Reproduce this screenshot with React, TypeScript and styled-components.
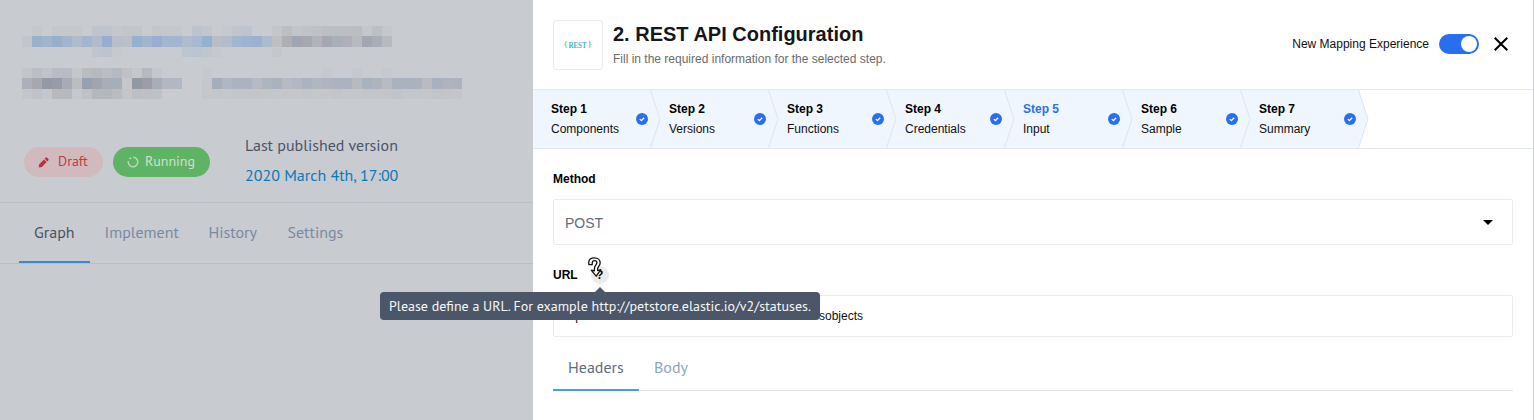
import React from 'react';
import styled, { createGlobalStyle } from 'styled-components';

const ui = `"Liberation Sans", Arial, sans-serif`;
const humanist = `"PT Sans", "Noto Sans", sans-serif`;

const Global = createGlobalStyle`
  * { box-sizing: border-box; }
  body { margin: 0; background: #c8cbd0; }
`;

const Page = styled.div`
  position: relative;
  display: flex;
  width: 1534px;
  height: 420px;
  overflow: hidden;
`;

/* ---------- dimmed background page ---------- */

const Backdrop = styled.div`
  width: 533px;
  background: #c8cbd0;
  font-family: ${humanist};
  display: flex;
  flex-direction: column;
`;

const Redacted = styled.div`
  height: 121px;
  padding: 26px 0 0 22px;
  display: flex;
  flex-direction: column;
  gap: 11px;
`;

const MosaicRow = styled.div<{ $h: number }>`
  display: flex;
  height: ${(p) => p.$h}px;
`;

const Tile = styled.span<{ $c: string }>`
  width: 10px;
  background: ${(p) => (p.$c === '-' ? 'transparent' : `#${p.$c}`)};
`;

const StatusBar = styled.div`
  height: 82px;
  display: flex;
  align-items: center;
  padding-left: 24px;
  border-bottom: 1px solid #bcc0c6;
`;

const Pill = styled.div<{ $w: number; $bg: string; $fg: string; $gap: number }>`
  width: ${(p) => p.$w}px;
  height: 30px;
  margin-right: 10px;
  padding: 0 0 1px 14px;
  display: flex;
  align-items: center;
  gap: ${(p) => p.$gap}px;
  border-radius: 15px;
  background: ${(p) => p.$bg};
  color: ${(p) => p.$fg};
  font-size: 14px;
  svg { flex: none; margin-top: 2px; }
`;

const Published = styled.div`
  margin: -4px 0 0 25px;
  font-size: 16px;
  line-height: 30px;
  color: #4a5568;
  white-space: nowrap;
`;

const PublishedDate = styled.div`
  color: #0d78b8;
`;

const PageTabs = styled.div`
  height: 61px;
  padding-left: 19px;
  display: flex;
  border-bottom: 1px solid #b9bec5;
`;

const Tab = styled.div<{ $w: number; $active?: boolean; $fg: string; $line?: string }>`
  width: ${(p) => p.$w}px;
  padding-left: 15px;
  display: flex;
  align-items: center;
  border-bottom: 2px solid ${(p) => (p.$active ? p.$line : 'transparent')};
  color: ${(p) => p.$fg};
  font-family: ${humanist};
  font-size: 16px;
  white-space: nowrap;
`;

/* ---------- side panel ---------- */

const Panel = styled.main`
  width: 1001px;
  background: #fff;
  border-right: 1px solid #c8cbd0;
  font-family: ${ui};
  font-size: 12px;
  color: #111;
`;

const Header = styled.header`
  height: 89px;
  padding: 0 25px 0 20px;
  display: flex;
  align-items: center;
`;

const Logo = styled.div`
  width: 50px;
  height: 50px;
  margin-right: 10px;
  border: 1px solid #ebebeb;
  border-radius: 3px;
  display: flex;
  align-items: center;
  justify-content: center;
`;

const Heading = styled.div`
  flex: 1;
`;

const Title = styled.h1`
  margin: 0 0 2px;
  font-size: 20px;
  line-height: 26px;
  font-weight: 700;
  color: #15171a;
`;

const Subtitle = styled.div`
  line-height: 20px;
  color: #6b6b6b;
`;

const Controls = styled.div`
  display: flex;
  align-items: center;
  padding-bottom: 2px;
`;

const Toggle = styled.div`
  width: 40px;
  height: 20px;
  margin: 0 15px 0 10px;
  padding: 2px;
  display: flex;
  justify-content: flex-end;
  border-radius: 10px;
  background: #286ff0;
`;

const Knob = styled.span`
  width: 16px;
  height: 16px;
  border-radius: 50%;
  background: #fff;
`;

const Steps = styled.div`
  height: 60px;
  display: flex;
  border-top: 1px solid #e3e8f0;
  border-bottom: 1px solid #e3e8f0;
`;

const StepBox = styled.div`
  position: relative;
  width: 118px;
  padding: 9px 9px 0 18px;
  display: flex;
  justify-content: space-between;
  background: #eff6fe;
  line-height: 20px;
`;

const Done = styled.svg`
  flex: none;
  margin: 14px -6px 0 0;
`;

const StepName = styled.div<{ $current: boolean }>`
  font-weight: 700;
  color: ${(p) => (p.$current ? '#2b70ee' : '#000')};
`;

const Chevron = styled.svg`
  position: absolute;
  z-index: 1;
  left: 117px;
  top: -1px;
`;

const Form = styled.div`
  padding: 20px 20px 0;
`;

const Label = styled.div`
  height: 20px;
  display: flex;
  align-items: center;
  font-weight: 700;
  color: #000;
`;

const Help = styled.span`
  width: 18px;
  height: 18px;
  margin-left: 13px;
  display: flex;
  align-items: center;
  justify-content: center;
  border-radius: 50%;
  background: #ebebeb;
  font-size: 12px;
`;

const Select = styled.div`
  height: 46px;
  margin: 10px 0 20px;
  padding: 1px 19px 0 11px;
  display: flex;
  align-items: center;
  justify-content: space-between;
  border: 1px solid #ebebeb;
  border-radius: 2px;
  font-size: 14px;
  color: #626b78;
`;

const Field = styled.div`
  height: 42px;
  margin-top: 10px;
  padding-left: 8px;
  display: flex;
  align-items: center;
  border: 1px solid #ebebeb;
  border-radius: 2px;
`;

const FieldStart = styled.span`
  width: 257px;
`;

const FormTabs = styled.div`
  height: 54px;
  display: flex;
  padding-top: 8px;
  border-bottom: 1px solid #e2e4ea;
`;

const FormTab = styled(Tab)`
  margin-bottom: -1px;
`;

const Tooltip = styled.div`
  position: absolute;
  z-index: 3;
  left: 380px;
  top: 292px;
  width: 440px;
  height: 28px;
  padding-left: 9px;
  display: flex;
  align-items: center;
  border-radius: 4px;
  background: #4b5669;
  color: #f4f6f8;
  font-family: ${humanist};
  font-size: 14px;
  white-space: nowrap;
  &::before {
    content: '';
    position: absolute;
    left: 215px;
    top: -5px;
    border: 5px solid transparent;
    border-top: 0;
    border-bottom-color: #4b5669;
  }
`;

const Cursor = styled.svg`
  position: absolute;
  z-index: 4;
  left: 586px;
  top: 256px;
`;

const mosaicTop: [number, string][] = [
  [10, '- c5c8cb - c5c8cb c5c8cb c5c8cb - bcc4ce bcc4ce c5c7ca c3c6c9 c3c6c9 - c4c7ca c5c8ca c5c8ca - bac4cf c0c6cd - c5c8cc c0c5cd bbc4d0 - - c4c7ca bcbfc2 c3c6c9 bfc2c6 bfc2c5 bcbfc2 bcbfc2 bcbfc2 bbbec1 c5c8cb bcbfc3 c5c8cb'],
  [11, 'c2c6ca 97b2cb a0b4cc 95b0ca a1b5cf afbccb a3b6cf b0bccc 98adcf b8bfca bbbfc8 94b1cd a1b5cb 99add0 a3b6d0 a3b6d0 afbccc a7b9d1 94b2d0 b8bec6 b6bbca a1b6d1 9eb3d0 9bb1ce acbbcc bdbfc4 adafb3 9fa6b1 a5a8ae b0b3ba a5a8b0 a8afb7 adb0b7 b7bac1 a2a7b1 a9adb4 b7bac1'],
  [10, '- - - - - - - c0c5cd bdc4ce c7c9cd - - - - - - bdc5cf bbc4d0 c0c6ce c6c8cc - - - - - c5c8cb'],
];

const mosaicBottom: [number, string][] = [
  [10, 'c2c6c9 bbbfc4 c0c4c8 b9bcc2 b7bbc2 c4c7ca b9bdc2 b6b9be babdc2 b5b9c3 bec2c7 c4c7cb b6b9be c3c6ca - - - - c6c9cc - - - - - - - - - - - c5c8cc - - c5c8cc - - c5c8cc'],
  [11, 'adb0b8 a5a8ad 929aa4 969ca8 a8abb5 bcbdc1 95a1ae a1a5ae a9adb4 a5afba c6c7ca 9298a4 9b9ea7 a7aeb8 b2b8c2 b0b8c3 - - c5c8cb a5aebb b0b7c0 abb3bf abb3bf b5bac3 adb5bf a9b2be b6bac3 b2b8c1 abb3bf b0b7bf aeb5bf abb3bf abb3bf b7bac1 a8b1be acb4c0 b8bbc1 a9b2be a9b2be a9b2be b8bbc2 a8b2be adb4be abb3bf'],
  [10, 'c3c6ca bfc3c7 c3c6ca b6b9be b6b9be c5c8cc bec1c6 b4b8bd b4b7bc b9bcc1 c3c5c8 bcbfc4 bec1c4 bfc2c5 - - - - c5c8cb c3c6ca c5c8cb c3c6c9 c3c6c9 c3c6c9 c4c7ca c5c8cb c4c7ca c5c8cb c3c6c9 c5c8cb c5c8cb c3c6c9 c5c8cb c5c8cb c3c6c9 c3c6c9 c3c6c9 c0c3c7 c3c6ca c3c6ca c5c8cb c1c4c8 c2c5c9 c3c6ca'],
];

const Mosaic = ({ rows }: { rows: [number, string][] }) => (
  <div>
    {rows.map(([h, line], r) => (
      <MosaicRow key={r} $h={h}>
        {line.split(' ').map((c, i) => (
          <Tile key={i} $c={c} />
        ))}
      </MosaicRow>
    ))}
  </div>
);

const steps = ['Components', 'Versions', 'Functions', 'Credentials', 'Input', 'Sample', 'Summary'];

const Step = ({ index, name }: { index: number; name: string }) => (
  <StepBox>
    <div>
      <StepName $current={index === 5}>Step {index}</StepName>
      {name}
    </div>
    <Chevron width="11" height="60" viewBox="0 0 11 60">
      <path d="M0 1H0.5L10 30L0.5 59H0Z" fill="#eff6fe" />
      <path d="M0.3 0.5L10 30L0.3 59.5" fill="none" stroke="#dce4f5" />
    </Chevron>
    <Done width="12" height="12" viewBox="0 0 12 12">
      <circle cx="6" cy="6" r="6" fill="#286ff0" />
      <path d="M3.8 6.1L5.4 7.6L8.2 4.7" fill="none" stroke="#fff" strokeWidth="1.3" />
    </Done>
  </StepBox>
);

export default function App() {
  return (
    <Page>
      <Global />
      <Backdrop>
        <Redacted>
          <Mosaic rows={mosaicTop} />
          <Mosaic rows={mosaicBottom} />
        </Redacted>
        <StatusBar>
          <Pill $w={79} $bg="#d0babd" $fg="#bf3d42" $gap={9}>
            <svg width="11" height="11" viewBox="0 0 11 11">
              <path d="M.7 10.4L1.2 7.2L6 2.4L8.7 5.1L3.9 9.9ZM6.7 1.7L7.8 .6Q8.5 0 9.2.7L10.4 1.9Q11 2.6 10.4 3.3L9.4 4.4Z" fill="#bf3138" />
            </svg>
            Draft
          </Pill>
          <Pill $w={97} $bg="#5fb365" $fg="#cfe0d1" $gap={6}>
            <svg width="12" height="12" viewBox="0 0 12 12">
              <path d="M6 1.2A4.8 4.8 0 1 1 1.3 5.1M2.4 3L4.2 1.6" fill="none" stroke="#b4dab7" strokeWidth="1.5" />
            </svg>
            Running
          </Pill>
          <Published>
            Last published version
            <PublishedDate>2020 March 4th, 17:00</PublishedDate>
          </Published>
        </StatusBar>
        <PageTabs>
          <Tab $w={70.5} $active $fg="#4a5361" $line="#3c87d2">Graph</Tab>
          <Tab $w={104} $fg="#7a8aa2">Implement</Tab>
          <Tab $w={79} $fg="#7a8aa2">History</Tab>
          <Tab $w={86} $fg="#7a8aa2">Settings</Tab>
        </PageTabs>
      </Backdrop>

      <Panel>
        <Header>
          <Logo>
            <svg width="30" height="12" viewBox="0 0 30 12" fontFamily="Liberation Serif, serif" fontWeight="700">
              <text x="1" y="8.4" fontSize="8" fill="#55cfa5">{'{'}</text>
              <text x="5.5" y="8.7" fontSize="7.5" textLength="18" lengthAdjust="spacingAndGlyphs" fill="#43b3cc">REST</text>
              <text x="25" y="8.4" fontSize="8" fill="#55cfa5">{'}'}</text>
            </svg>
          </Logo>
          <Heading>
            <Title>2. REST API Configuration</Title>
            <Subtitle>Fill in the required information for the selected step.</Subtitle>
          </Heading>
          <Controls>
            New Mapping Experience
            <Toggle>
              <Knob />
            </Toggle>
            <svg width="14" height="14" viewBox="0 0 14 14">
              <path d="M.7.7L13.3 13.3M13.3.7L.7 13.3" stroke="#000" strokeWidth="2" />
            </svg>
          </Controls>
        </Header>

        <Steps>
          {steps.map((name, i) => (
            <Step key={name} index={i + 1} name={name} />
          ))}
        </Steps>

        <Form>
          <Label>Method</Label>
          <Select>
            POST
            <svg width="10" height="5" viewBox="0 0 10 5">
              <path d="M0 0H10L5 5Z" fill="#000" />
            </svg>
          </Select>
          <Label>
            URL
            <Help>?</Help>
          </Label>
          <Field>
            <FieldStart>http</FieldStart>
            sobjects
          </Field>
          <FormTabs>
            <FormTab $w={86} $active $fg="#5f6c80" $line="#4a9bee">Headers</FormTab>
            <FormTab $w={70} $fg="#8ea3be">Body</FormTab>
          </FormTabs>
        </Form>
      </Panel>

      <Tooltip>Please define a URL. For example http://petstore.elastic.io/v2/statuses.</Tooltip>
      <Cursor width="18" height="22" viewBox="0 0 18 22">
        <path
          d="M2.8 8.6V6C2.8 3.4 5 1.8 8.2 1.8C11.8 1.8 14.2 4 14.2 6.8C14.2 9.8 11.6 10.6 11.6 12.8V14.6L14.8 13.6L10.2 20.2L5.2 14.2L8.4 14.8V12.4C8.4 9.6 10.9 8.9 10.9 6.8C10.9 5.4 9.8 4.7 8.4 4.7C7 4.7 6.3 5.5 6.3 6.6L6.2 8.6Z"
          fill="#fff"
          stroke="#111"
          strokeWidth="1.3"
          strokeLinejoin="round"
        />
      </Cursor>
    </Page>
  );
}
